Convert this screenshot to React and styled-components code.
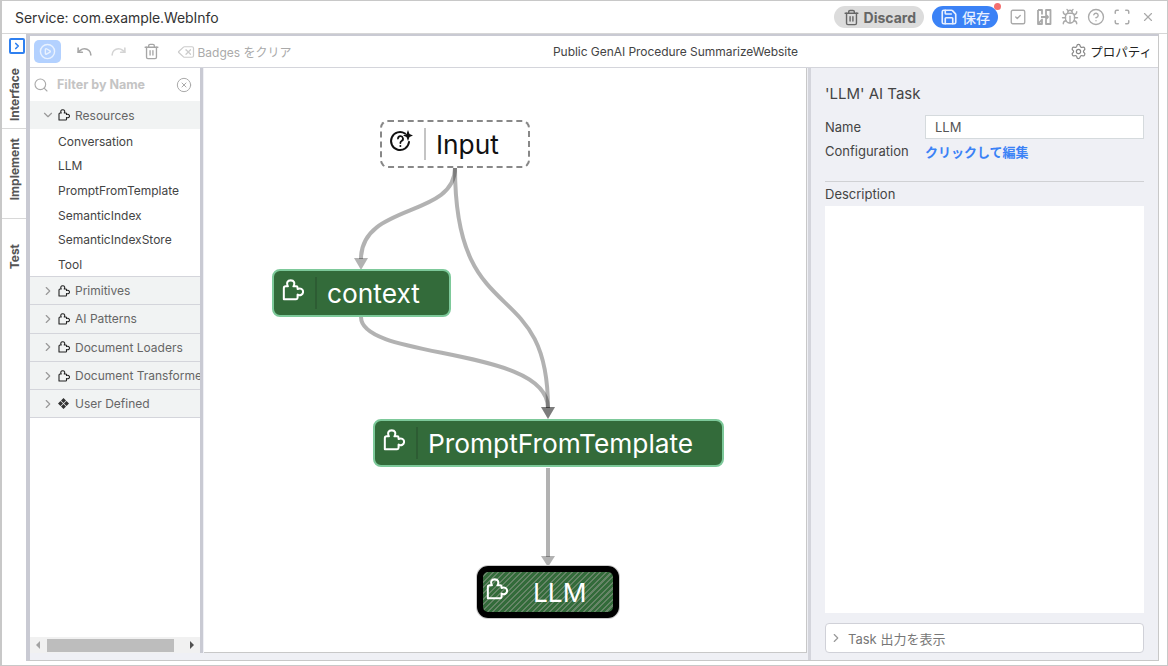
import React from 'react';
import styled, { createGlobalStyle } from 'styled-components';
import {
  Trash2, Save, SquareCheck, Bug, CircleHelp, Scan, X, Undo, Redo, Delete,
  CirclePlay, Settings, ChevronDown, ChevronRight, Search, CircleX,
} from 'lucide-react';

const GlobalStyle = createGlobalStyle`
  html, body { margin: 0; padding: 0; background: #fff; overflow: hidden; }
  * { box-sizing: border-box; }
  body { font-family: Inter, "Noto Sans CJK JP", sans-serif; color: #333; }
`;

const Frame = styled.div`
  width: 1168px;
  height: 666px;
  border: 1px solid #c8c8c8;
  border-width: 1px 1px 1px 2px;
  display: flex;
  flex-direction: column;
  background: #fff;
`;

const Header = styled.header`
  height: 33px;
  flex: none;
  display: flex;
  align-items: center;
  padding: 0 12px 0 13px;
  border-bottom: 1px solid #d6d6d6;
`;

const ServiceTitle = styled.div`
  flex: 1;
  font-size: 14px;
  letter-spacing: -0.07px;
  color: #333;
`;

const Pill = styled.button`
  height: 22px;
  border: 0;
  border-radius: 11px;
  padding: ${p => (p.$primary ? '0 8px' : '0 8px 0 9px')};
  margin-right: 8px;
  display: flex;
  align-items: center;
  gap: 4px;
  font: ${p => (p.$primary ? 500 : 700)} 14px Inter, "Noto Sans CJK JP", sans-serif;
  background: ${p => (p.$primary ? '#3b82f6' : '#dcdcdc')};
  color: ${p => (p.$primary ? '#e8f0ff' : '#666')};
  position: relative;
`;

const Dot = styled.span`
  position: absolute;
  top: -3px;
  right: -3px;
  width: 7px;
  height: 7px;
  border-radius: 50%;
  background: #f47070;
`;

const HeaderIcons = styled.div`
  display: flex;
  align-items: center;
  gap: 8px;
  margin-left: 3px;
  color: #aaa;
`;

const Body = styled.div`
  flex: 1;
  display: flex;
  min-height: 0;
`;

const Rail = styled.nav`
  width: 24px;
  flex: none;
  display: flex;
  flex-direction: column;
  padding-top: 4px;
`;

const RailToggle = styled.div`
  width: 16px;
  height: 16px;
  margin: 0 0 4px 7px;
  border: 2px solid #2f80f0;
  border-radius: 2px;
  color: #2f80f0;
  display: flex;
  align-items: center;
  justify-content: center;
`;

const RailTab = styled.div`
  height: ${p => p.$h}px;
  border-bottom: ${p => (p.$last ? 0 : '1px solid #d8d8d8')};
  display: flex;
  align-items: center;
  justify-content: ${p => (p.$last ? 'flex-start' : 'center')};
  flex-direction: column;
  padding-top: ${p => p.$pt || 0}px;
  padding-bottom: ${p => p.$pb || 0}px;
  padding-left: 1px;
  font-size: 12px;
  font-weight: 700;
  color: #555;
`;

const RailLabel = styled.span`
  writing-mode: vertical-rl;
  transform: rotate(180deg);
`;

const Main = styled.main`
  flex: 1;
  display: flex;
  flex-direction: column;
  margin: 0 8px 4px 0;
  border-left: 4px solid #c9cad3;
  border-top: 2px solid #c9cad3;
  border-right: 1px solid #c8c8c8;
  border-bottom: 1px solid #c8c8c8;
  background: #eff0f5;
  min-height: 0;
`;

const Toolbar = styled.div`
  height: 32px;
  flex: none;
  display: flex;
  align-items: center;
  padding: 0 6px 0 4px;
  background: #fff;
  border-bottom: 1px solid #d4d5db;
  position: relative;
`;

const RunButton = styled.div`
  width: 27px;
  height: 23px;
  border-radius: 5px;
  background: #b3d1ff;
  color: #e9f2ff;
  display: flex;
  align-items: center;
  justify-content: center;
  margin-right: 7px;
`;

const ToolIcon = styled.span`
  display: flex;
  width: 33.5px;
  justify-content: center;
  color: ${p => (p.$faint ? '#d4d4d4' : '#a6a6a6')};
`;

const ClearBadges = styled.div`
  display: flex;
  align-items: center;
  gap: 3px;
  margin-left: 8px;
  font-size: 12px;
  color: #aaa;
`;

const ToolTitle = styled.div`
  position: absolute;
  left: 523px;
  font-size: 12px;
  letter-spacing: -0.05px;
  color: #444;
  white-space: nowrap;
`;

const ToolRight = styled.div`
  margin-left: auto;
  display: flex;
  align-items: center;
  gap: 3px;
  font-size: 12.5px;
  color: #222;
  svg { color: #888; }
`;

const Columns = styled.div`
  flex: 1;
  display: flex;
  min-height: 0;
`;

const Sidebar = styled.aside`
  width: 170px;
  flex: none;
  display: flex;
  flex-direction: column;
  background: #fff;
  overflow: hidden;
  margin-bottom: 7px;
`;

const Splitter = styled.div`
  width: 3px;
  flex: none;
  background: #c9cad3;
  margin-bottom: 7px;
`;

const FilterRow = styled.div`
  height: 33px;
  flex: none;
  display: flex;
  align-items: center;
  padding: 0 8px 0 3px;
  color: #aaa;
`;

const FilterText = styled.div`
  flex: 1;
  margin-left: 8px;
  font-size: 12.5px;
  font-weight: 700;
  color: #c4c4c4;
`;

const Tree = styled.div`
  flex: 1;
  min-height: 0;
`;

const GroupRow = styled.div`
  height: ${p => (p.$open ? 28 : 28.3)}px;
  display: flex;
  align-items: center;
  padding-left: 11px;
  background: #f1f3f3;
  border-bottom: ${p => (p.$open ? 0 : '1px solid #d4d5db')};
  font-size: 12px;
  color: #666;
  white-space: nowrap;
  svg { flex: none; }
`;

const GroupIcon = styled.span`
  display: flex;
  flex: none;
  width: 17px;
  margin-left: 3px;
  color: #222;
`;

const ItemList = styled.div`
  height: 148px;
  border-bottom: 1px solid #d4d5db;
  padding-left: 28px;
`;

const Item = styled.div`
  height: 24.6px;
  display: flex;
  align-items: center;
  font-size: 12px;
  color: #444;
`;

const ScrollBar = styled.div`
  height: 16px;
  flex: none;
  background: #f1f1f1;
  display: flex;
  align-items: center;
`;

const ScrollArrow = styled.span`
  width: 0;
  height: 0;
  border-top: 4px solid transparent;
  border-bottom: 4px solid transparent;
  ${p => (p.$right
    ? 'border-left: 4px solid #505050; margin-left: 16px;'
    : 'border-right: 4px solid #a3a3a3; margin: 0 7px 0 6px;')}
`;

const ScrollThumb = styled.div`
  width: 127px;
  height: 13px;
  background: #bdbdbd;
`;

const CanvasWrap = styled.div`
  width: 603px;
  flex: none;
  position: relative;
  background: #fff;
  border-bottom: 1px solid #c8c8c8;
  border-right: 1px solid #c8c8c8;
  margin-bottom: 7px;
  margin-left: 1px;
`;

const Edges = styled.svg`
  position: absolute;
  left: 0;
  top: 0;
  width: 100%;
  height: 100%;
`;

const Node = styled.div`
  position: absolute;
  left: ${p => p.$x}px;
  top: ${p => p.$y}px;
  width: ${p => p.$w}px;
  height: ${p => p.$h}px;
  display: flex;
  align-items: center;
  border-radius: 8px;
  font-size: 26.3px;
  padding-left: 8px;
  white-space: nowrap;
  color: #fff;
  background: #336b3a;
  border: 2px solid #7dc99a;
`;

const InputNode = styled(Node)`
  background: #fff;
  border: 2px dashed #888;
  color: #111;
`;

const SelectedNode = styled(Node)`
  border: 6px solid #000;
  border-radius: 11px;
  box-shadow: 0 0 0 1px #ccc;
  padding-left: 3px;
  background: repeating-linear-gradient(135deg, #336b3a 0 2.5px, #668567 2.5px 4px);
`;

const NodeIcon = styled.span`
  display: flex;
  width: 26px;
  flex: none;
  margin-top: -6px;
  margin-left: ${p => p.$ml || 0}px;
`;

const NodeDivider = styled.span`
  width: 2px;
  height: 32px;
  flex: none;
  margin: 0 10px 0 ${p => p.$ml || 7}px;
  background: ${p => (p.$light ? '#c4c4c4' : '#2d5c33')};
`;

const NodeText = styled.span`
  margin-left: ${p => p.$ml || 0}px;
`;

const Props = styled.section`
  flex: 1;
  padding: 14px 14px 7px 14px;
  margin-left: 1px;
  border-left: 3px solid #d4d5dc;
  display: flex;
  flex-direction: column;
  font-size: 13px;
  color: #444;
`;

const PropsTitle = styled.h2`
  margin: 0 0 9px;
  font-size: 15px;
  line-height: 24px;
  font-weight: 400;
  color: #444;
`;

const Field = styled.div`
  display: flex;
  align-items: center;
  height: 24px;
`;

const FieldLabel = styled.label`
  width: 100px;
  flex: none;
`;

const NameInput = styled.div`
  flex: 1;
  height: 24px;
  padding: 0 9px;
  line-height: 22px;
  background: #fff;
  border: 1px solid #d5dadd;
  color: #555;
`;

const EditLink = styled.a`
  color: #3b82f6;
  font-weight: 700;
`;

const Rule = styled.hr`
  width: 100%;
  border: 0;
  border-top: 1px solid #d0d1d4;
  margin: 18px 0 4px;
`;

const DescLabel = styled.div`
  line-height: 16px;
  margin-bottom: 4px;
`;

const DescBox = styled.div`
  flex: 1;
  background: #fff;
`;

const OutputToggle = styled.div`
  height: 30px;
  flex: none;
  margin-top: 10px;
  padding-left: 3px;
  display: flex;
  align-items: center;
  gap: 5px;
  background: #fff;
  border: 1px solid #d0d1d8;
  border-radius: 4px;
  color: #777;
  svg { color: #999; }
`;

const PuzzleIcon = ({ size = 24, sw = 2.2 }) => (
  <svg width={size} height={size} viewBox="0 0 24 24" fill="none" stroke="currentColor" strokeWidth={sw} strokeLinejoin="round" strokeLinecap="round">
    <path d="M2 22 V10 Q2 8 4 8 H6.5 C4.5 4 6 1.5 9.5 1.5 C13 1.5 14.5 4 12.5 8 H15.5 A1.5 1.5 0 0 1 17 9.5 V11 C20 9.5 23 11 23 14 C23 17 20 18.5 17 17 V20.5 A1.5 1.5 0 0 1 15.5 22 Z" />
  </svg>
);

const DiamondsIcon = () => (
  <svg width="11" height="11" viewBox="0 0 11 11" fill="#333">
    <path d="M5.5 0 L8 2.5 L5.5 5 L3 2.5 Z M2.5 3 L5 5.5 L2.5 8 L0 5.5 Z M8.5 3 L11 5.5 L8.5 8 L6 5.5 Z M5.5 6 L8 8.5 L5.5 11 L3 8.5 Z" />
  </svg>
);

const CompareIcon = () => (
  <svg width="18" height="18" viewBox="0 0 18 18" fill="none" stroke="currentColor" strokeWidth="1.8" strokeLinejoin="round">
    <path d="M3 2 H7 V6.5 M7 11.5 V16 H3 Z M3 2 V16 M11 6.5 V2 H15.5 V16 H11 V11.5 M6 9 H13 M10.5 6.5 L13 9 L10.5 11.5" />
  </svg>
);

const QuestionSparkIcon = () => (
  <svg width="26" height="26" viewBox="0 0 26 26" fill="none" stroke="#111" strokeWidth="2">
    <path d="M17 5.5 A9 9 0 1 0 21 14" strokeLinecap="round" />
    <path d="M10 10.5 A2.5 2.5 0 1 1 13.5 13 Q12.4 13.6 12.4 15" strokeWidth="1.8" strokeLinecap="round" />
    <circle cx="12.4" cy="18" r="1" fill="#111" stroke="none" />
    <path d="M20 2 L21.5 6 L25 7.5 L21.5 9 L20 13 L18.5 9 L15 7.5 L18.5 6 Z" fill="#111" stroke="none" />
  </svg>
);

const resources = ['Conversation', 'LLM', 'PromptFromTemplate', 'SemanticIndex', 'SemanticIndexStore', 'Tool'];
const groups = ['Primitives', 'AI Patterns', 'Document Loaders', 'Document Transformers'];

export default function App() {
  return (
    <>
      <GlobalStyle />
      <Frame>
        <Header>
          <ServiceTitle>Service: com.example.WebInfo</ServiceTitle>
          <Pill>
            <Trash2 size={17} strokeWidth={2} />
            Discard
          </Pill>
          <Pill $primary>
            <Save size={18} strokeWidth={2.2} />
            保存
            <Dot />
          </Pill>
          <HeaderIcons>
            <SquareCheck size={18} strokeWidth={1.8} />
            <CompareIcon />
            <Bug size={18} strokeWidth={1.8} />
            <CircleHelp size={18} strokeWidth={1.8} />
            <Scan size={18} strokeWidth={2} />
            <X size={14} strokeWidth={2} style={{ marginLeft: 2 }} />
          </HeaderIcons>
        </Header>
        <Body>
          <Rail>
            <RailToggle><ChevronRight size={10} strokeWidth={4} /></RailToggle>
            <RailTab $h={71} $pt={3}><RailLabel>Interface</RailLabel></RailTab>
            <RailTab $h={90} $pb={9}><RailLabel>Implement</RailLabel></RailTab>
            <RailTab $h={70} $last $pt={25}><RailLabel>Test</RailLabel></RailTab>
          </Rail>
          <Main>
            <Toolbar>
              <RunButton><CirclePlay size={17} strokeWidth={2} /></RunButton>
              <ToolIcon><Undo size={17} strokeWidth={2.2} /></ToolIcon>
              <ToolIcon $faint><Redo size={17} strokeWidth={2.2} /></ToolIcon>
              <ToolIcon><Trash2 size={17} strokeWidth={1.9} /></ToolIcon>
              <ClearBadges>
                <Delete size={18} strokeWidth={1.6} color="#ccc" />
                Badges をクリア
              </ClearBadges>
              <ToolTitle>Public GenAI Procedure SummarizeWebsite</ToolTitle>
              <ToolRight>
                <Settings size={17} strokeWidth={1.7} />
                プロパティ
              </ToolRight>
            </Toolbar>
            <Columns>
              <Sidebar>
                <FilterRow>
                  <Search size={16} strokeWidth={1.7} />
                  <FilterText>Filter by Name</FilterText>
                  <CircleX size={16} strokeWidth={1.5} />
                </FilterRow>
                <Tree>
                  <GroupRow $open>
                    <ChevronDown size={14} strokeWidth={2} color="#999" />
                    <GroupIcon><PuzzleIcon size={12} /></GroupIcon>
                    Resources
                  </GroupRow>
                  <ItemList>
                    {resources.map(name => <Item key={name}>{name}</Item>)}
                  </ItemList>
                  {groups.map(name => (
                    <GroupRow key={name}>
                      <ChevronRight size={14} strokeWidth={2} color="#999" />
                      <GroupIcon><PuzzleIcon size={12} /></GroupIcon>
                      {name}
                    </GroupRow>
                  ))}
                  <GroupRow>
                    <ChevronRight size={14} strokeWidth={2} color="#999" />
                    <GroupIcon><DiamondsIcon /></GroupIcon>
                    User Defined
                  </GroupRow>
                </Tree>
                <ScrollBar>
                  <ScrollArrow />
                  <ScrollThumb />
                  <ScrollArrow $right />
                </ScrollBar>
              </Sidebar>
              <Splitter />
              <CanvasWrap>
                <Edges>
                  <g fill="none" stroke="rgba(0,0,0,0.3)" strokeWidth="4">
                    <path d="M251 100 C251 150 157 135 157 191" />
                    <path d="M251 100 C251 265 344 205 344 340" />
                    <path d="M157 249 C157 292 344 278 344 340" />
                    <path d="M344 400 V489" />
                  </g>
                  <g fill="rgba(0,0,0,0.3)">
                    <path d="M150 190 H164 L157 202 Z" />
                    <path d="M337 339 H351 L344 351 Z" />
                    <path d="M337 339 H351 L344 351 Z" />
                    <path d="M337 488 H351 L344 499 Z" />
                  </g>
                </Edges>
                <InputNode $x={176} $y={52} $w={149.5} $h={48}>
                  <NodeIcon $ml={-2}><QuestionSparkIcon /></NodeIcon>
                  <NodeDivider $light $ml={10} />
                  Input
                </InputNode>
                <Node $x={68} $y={201} $w={179} $h={48}>
                  <NodeIcon><PuzzleIcon size={22} /></NodeIcon>
                  <NodeDivider />
                  context
                </Node>
                <Node $x={169} $y={351} $w={350.5} $h={48}>
                  <NodeIcon><PuzzleIcon size={22} /></NodeIcon>
                  <NodeDivider />
                  PromptFromTemplate
                </Node>
                <SelectedNode $x={273} $y={498} $w={142} $h={52}>
                  <NodeIcon><PuzzleIcon size={22} /></NodeIcon>
                  <NodeText $ml={21}>LLM</NodeText>
                </SelectedNode>
              </CanvasWrap>
              <Props>
                <PropsTitle>'LLM' AI Task</PropsTitle>
                <Field>
                  <FieldLabel>Name</FieldLabel>
                  <NameInput>LLM</NameInput>
                </Field>
                <Field>
                  <FieldLabel>Configuration</FieldLabel>
                  <EditLink>クリックして編集</EditLink>
                </Field>
                <Rule />
                <DescLabel>Description</DescLabel>
                <DescBox />
                <OutputToggle>
                  <ChevronRight size={14} strokeWidth={2} />
                  Task 出力を表示
                </OutputToggle>
              </Props>
            </Columns>
          </Main>
        </Body>
      </Frame>
    </>
  );
}
